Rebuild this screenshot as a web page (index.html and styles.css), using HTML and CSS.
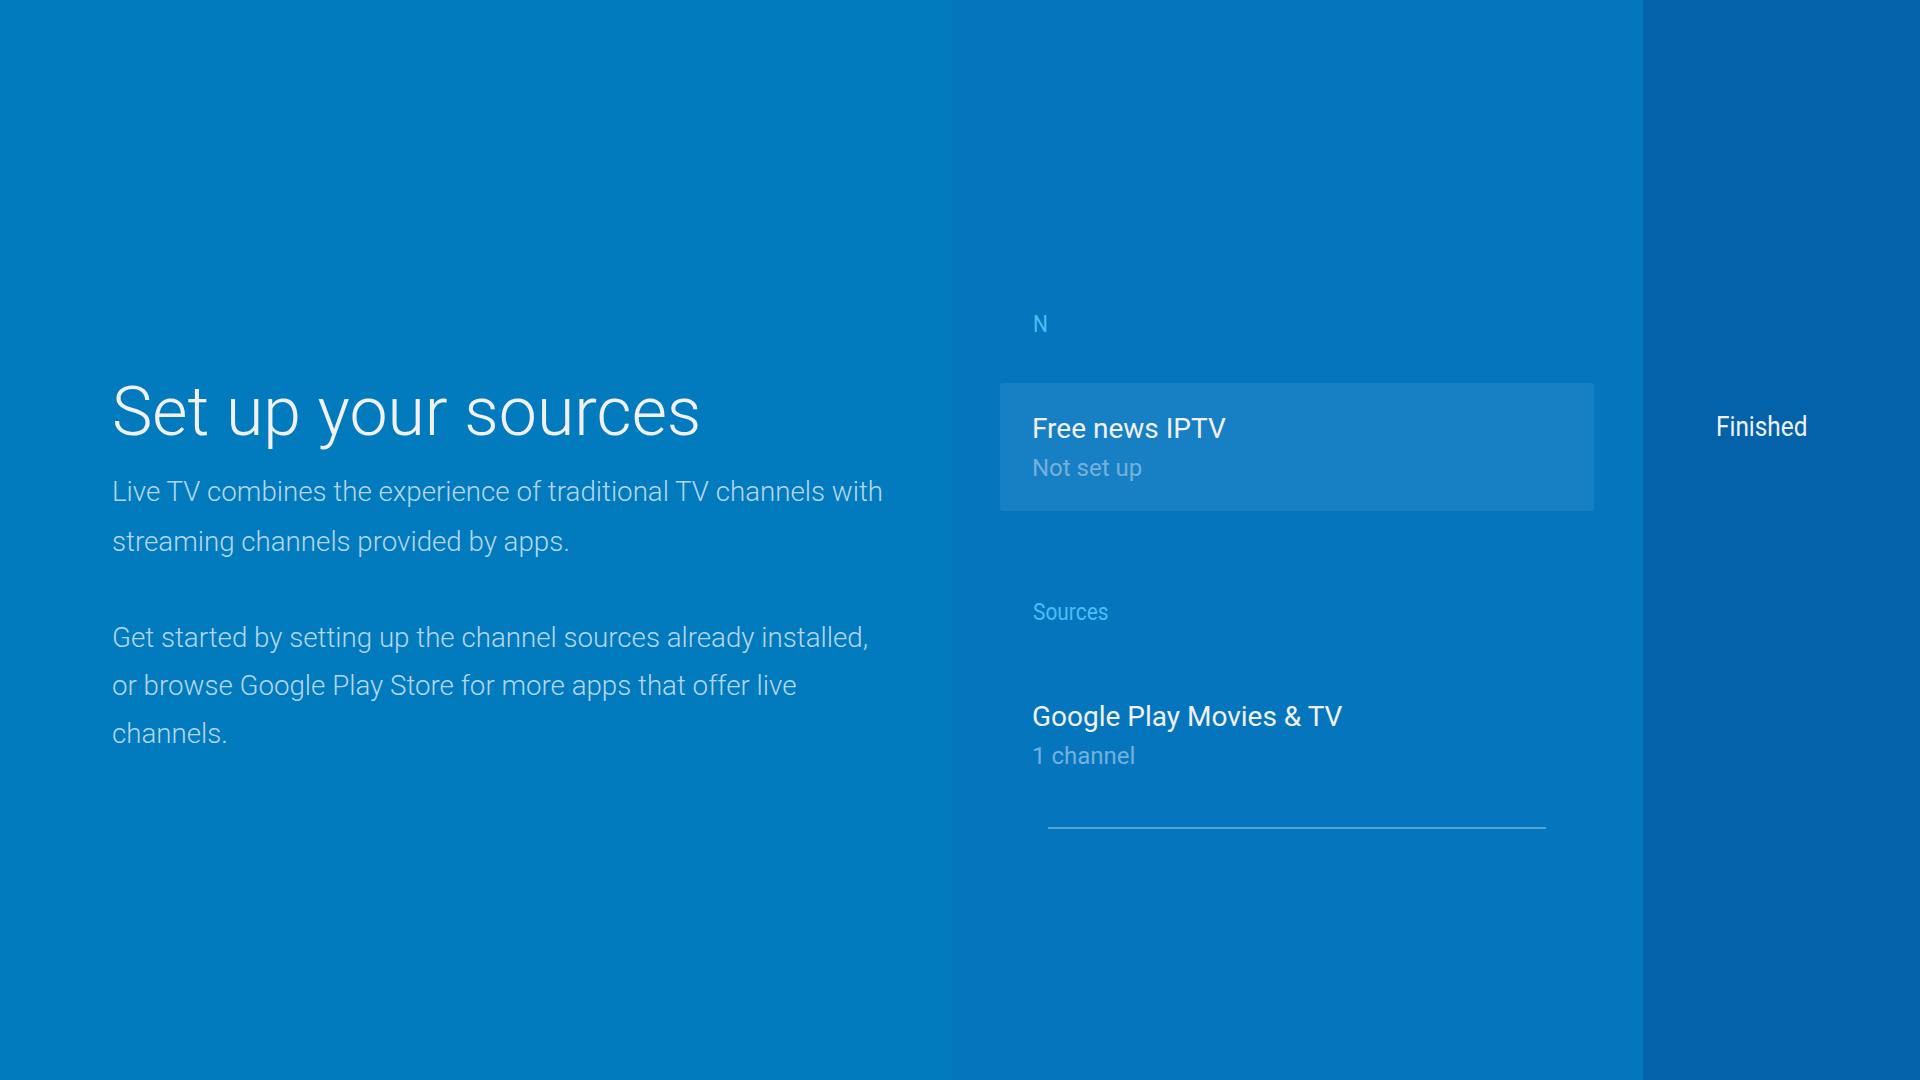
FILE: index.html
```html
<!DOCTYPE html>
<html lang="en">
<head>
<meta charset="utf-8">
<title>Set up your sources</title>
<link rel="stylesheet" href="styles.css">
</head>
<body>
<div class="screen">
  <section class="intro">
    <h1 class="intro-title">Set up your sources</h1>
    <p class="intro-text intro-text-first">Live TV combines the experience of traditional TV channels with<br>streaming channels provided by apps.</p>
    <p class="intro-text intro-text-second">Get started by setting up the channel sources already installed,<br>or browse Google Play Store for more apps that offer live<br>channels.</p>
  </section>
  <section class="list">
    <div class="list-header"><span class="cond">N</span></div>
    <div class="item item-focused">
      <div class="item-title">Free news IPTV</div>
      <div class="item-sub">Not set up</div>
    </div>
    <div class="list-header list-header-sources"><span class="cond">Sources</span></div>
    <div class="item item-plain">
      <div class="item-title">Google Play Movies &amp; TV</div>
      <div class="item-sub">1 channel</div>
    </div>
    <div class="divider"></div>
  </section>
  <section class="actions">
    <div class="action"><span class="cond">Finished</span></div>
  </section>
</div>
</body>
</html>
```
FILE: styles.css
```css
html, body {
  margin: 0;
  padding: 0;
  width: 1920px;
  height: 1080px;
  overflow: hidden;
  font-family: Roboto, "Noto Sans", "Liberation Sans", sans-serif;
}

.screen {
  display: flex;
  width: 1920px;
  height: 1080px;
}

.cond {
  display: inline-block;
  transform: scaleX(0.87);
  transform-origin: left center;
}

/* Left intro */
.intro {
  width: 952px;
  flex: none;
  background: #027bbe;
  box-sizing: border-box;
  padding: 372px 0 0 112px;
}

.intro-title {
  margin: 0;
  font-size: 68px;
  line-height: 80px;
  font-weight: 300;
  color: #f1f1f1;
  white-space: nowrap;
}

.intro-text {
  margin: 0;
  font-size: 27.7px;
  font-weight: 300;
  color: #b4d7ec;
  white-space: nowrap;
}

.intro-text-first {
  margin-top: 14.5px;
  line-height: 50px;
}

.intro-text-second {
  margin-top: 47.5px;
  line-height: 48px;
}

/* Middle list */
.list {
  width: 691px;
  flex: none;
  background: #0576bd;
  box-sizing: border-box;
  padding: 312px 49px 0 48px;
  display: flex;
  flex-direction: column;
}

.list-header {
  font-size: 24px;
  line-height: 24px;
  color: #4ebdf5;
  padding-left: 33px;
  height: 24px;
}

.list-header-sources {
  margin-top: 89px;
}

.item {
  box-sizing: border-box;
  padding-left: 32px;
  border-radius: 3px;
}

.item-focused {
  margin-top: 47px;
  height: 128px;
  padding-top: 32px;
  background: #177fc4;
}

.item-plain {
  margin-top: 79px;
}

.item-title {
  font-size: 28px;
  line-height: 28px;
  color: #f1f1f1;
}

.item-sub {
  margin-top: 14px;
  font-size: 24px;
  line-height: 22px;
  color: #74b1dc;
}

.divider {
  margin: 60px 0 0 48px;
  width: 498px;
  height: 2px;
  background: #5a9fd3;
}

/* Right actions */
.actions {
  flex: 1;
  background: #0462ab;
  box-sizing: border-box;
  padding: 413px 0 0 73px;
}

.action {
  font-size: 28px;
  line-height: 28px;
  color: #eef2f7;
}
```
